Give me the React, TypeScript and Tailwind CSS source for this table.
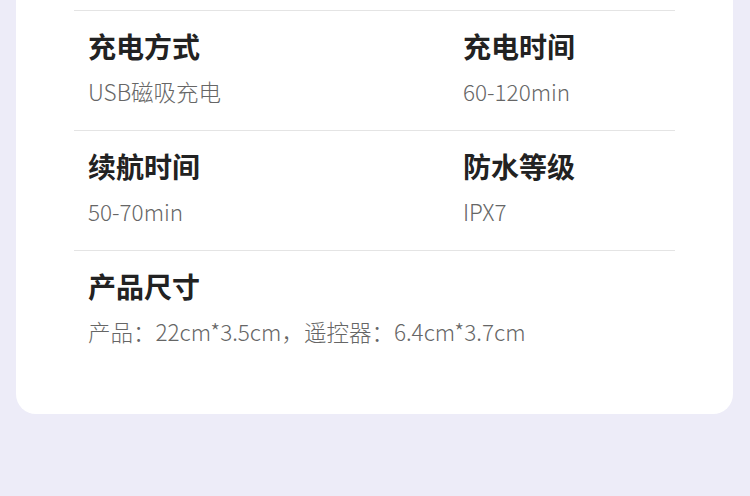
import React from 'react';

interface SpecItem {
  label: string;
  value: string;
}

const rows: SpecItem[][] = [
  [
    { label: '充电方式', value: 'USB磁吸充电' },
    { label: '充电时间', value: '60-120min' },
  ],
  [
    { label: '续航时间', value: '50-70min' },
    { label: '防水等级', value: 'IPX7' },
  ],
  [{ label: '产品尺寸', value: '产品：22cm*3.5cm，遥控器：6.4cm*3.7cm' }],
];

const font = { fontFamily: '"Noto Sans CJK SC", "Noto Sans", sans-serif' };

export default function App() {
  return (
    <div className="w-[750px] h-[496px] bg-[#edecf8] overflow-hidden" style={font}>
      <div className="ml-[16px] mr-[17px] bg-white rounded-b-[20px] pt-[10px] pb-[44px]">
        <div className="mx-[58px]">
          {rows.map((row, i) => (
            <div key={i} className="border-t border-[#e4e4e4] grid grid-cols-[375px_1fr]">
              {row.map((item) => (
                <div
                  key={item.label}
                  className={`px-[14px] pt-[17px] pb-[24px] ${row.length === 1 ? 'col-span-2' : ''}`}
                >
                  <div className="text-[28px] leading-[36px] font-bold text-[#222222]">{item.label}</div>
                  <div className="mt-[12px] text-[22.5px] leading-[30px] font-light text-[#666666] whitespace-nowrap">
                    {item.value}
                  </div>
                </div>
              ))}
            </div>
          ))}
        </div>
      </div>
    </div>
  );
}
